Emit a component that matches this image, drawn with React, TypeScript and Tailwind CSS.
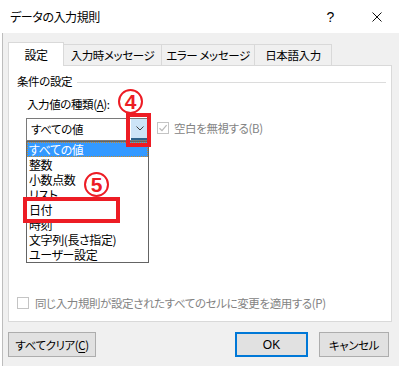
import React from "react";

const jp =
  "font-['Noto_Sans_CJK_JP','Noto_Sans_CJK_SC',sans-serif] [font-feature-settings:'palt']";

const tabs = [
  { label: "入力時メッセージ", w: "w-[98px]" },
  { label: "エラー メッセージ", w: "w-[93px]" },
  { label: "日本語入力", w: "w-[77px]" },
];

const items = [
  "すべての値",
  "整数",
  "小数点数",
  "リスト",
  "日付",
  "時刻",
  "文字列(長さ指定)",
  "ユーザー設定",
];

const Circled = ({ n, className }: { n: string; className: string }) => (
  <div
    className={`absolute w-[25px] h-[25px] rounded-full border-2 border-[#ed1c24] bg-white flex items-center justify-center text-[#ed1c24] text-[21px] font-bold leading-none tracking-normal font-['Liberation_Sans',sans-serif] ${className}`}
  >
    {n}
  </div>
);

const Check = ({ checked }: { checked?: boolean }) => (
  <div className="w-[12px] h-[12px] border border-[#c4c4c4] bg-white shrink-0 flex items-center justify-center">
    {checked && (
      <svg width="10" height="10" viewBox="0 0 10 10">
        <path d="M1.5 5.2 L4 7.6 L8.6 2.2" fill="none" stroke="#b8b8b8" strokeWidth="1.2" />
      </svg>
    )}
  </div>
);

export default function App() {
  return (
    <div
      className={`relative w-[399px] h-[366px] overflow-hidden bg-white text-[11.5px] tracking-[-0.4px] text-black ${jp}`}
    >
      <div className="flex flex-col h-full">
        {/* title bar */}
        <div className="h-[33px] shrink-0 flex items-center pl-[10px] pr-[17px]">
          <span className="leading-[16px] text-[12px]">データの入力規則</span>
          <span className="ml-auto text-[14px] leading-none font-['Liberation_Sans',sans-serif] mt-[1px]">?</span>
          <svg className="ml-[38px] mt-[1px]" width="10" height="10" viewBox="0 0 10 10">
            <path d="M0.5 0.5 L9.5 9.5 M9.5 0.5 L0.5 9.5" stroke="#111" strokeWidth="1" />
          </svg>
        </div>

        {/* body */}
        <div className="flex-1 flex flex-col ml-[2px] border-l border-[#bdbdbd] bg-[#f0f0f0] pl-[5px] pr-[7px] pt-[9px]">
          {/* tabs */}
          <div className="flex items-end h-[23px]">
            <div className="relative z-10 w-[56px] h-[24px] -mb-px bg-white border border-b-0 border-[#d9d9d9] flex items-center justify-center leading-[16px] text-[12px]">
              設定
            </div>
            {tabs.map((t) => (
              <div
                key={t.label}
                className={`${t.w} h-[21px] border-t border-r border-[#d9d9d9] bg-[#f0f0f0] flex items-center justify-center leading-[16px] whitespace-pre`}
              >
                {t.label}
              </div>
            ))}
          </div>

          {/* panel */}
          <div className="h-[257px] shrink-0 border border-[#d9d9d9] bg-white flex flex-col pl-[8px] pt-[7px] pb-[10px]">
            <div className="flex items-center leading-[16px]">
              <span>条件の設定</span>
              <div className="flex-1 h-px bg-[#dcdcdc] ml-[5px] mr-[5px] mt-[3px]" />
            </div>
            <div className="mt-[7px] ml-[10px] leading-[16px]">
              入力値の種類(<span className="underline underline-offset-2">A</span>):
            </div>
            <div className="mt-[6px] ml-[9px] flex items-start">
              <div className="relative w-[123px] h-[23px] border border-[#7a7a7a] bg-white">
                <div className="pl-[4px] leading-[21px]">すべての値</div>
                <div className="absolute right-0 top-0 bottom-0 w-[17px] bg-[#cce4f7] border-b-2 border-[#2c628b] flex items-center justify-center">
                  <svg width="8" height="5" viewBox="0 0 8 5">
                    <path d="M0.5 0.5 L4 4 L7.5 0.5" fill="none" stroke="#404040" strokeWidth="1" />
                  </svg>
                </div>
                {/* open list */}
                <div className="absolute -left-px top-[22px] z-20 w-[123px] h-[122px] border border-[#646464] bg-white">
                  {items.map((it, i) => (
                    <div
                      key={it}
                      className={`h-[15px] leading-[15px] pl-[2px] whitespace-nowrap text-[12px] ${
                        i === 0 ? "bg-[#3399ff] text-white outline outline-1 outline-dotted outline-[#c98a2a] -outline-offset-1" : ""
                      }`}
                    >
                      {it}
                    </div>
                  ))}
                </div>
              </div>
              <div className="ml-[8px] mt-[3px] flex items-center gap-[5px] text-[#838383] leading-[14px]">
                <Check checked />
                <span>空白を無視する(B)</span>
              </div>
            </div>

            <div className="mt-auto flex items-center gap-[6px] text-[#838383] leading-[16px]">
              <Check />
              <span>同じ入力規則が設定されたすべてのセルに変更を適用する(P)</span>
            </div>
          </div>

          {/* buttons */}
          <div className="mt-[10px] flex items-start">
            <button className="w-[88px] h-[25px] bg-[#e1e1e1] border border-[#adadad] leading-[16px]">
              すべてクリア(<span className="underline underline-offset-2">C</span>)
            </button>
            <button className="ml-auto w-[73px] h-[25px] bg-[#e1e1e1] border-2 border-[#0078d7] leading-[16px] font-['Liberation_Sans',sans-serif] text-[12px] tracking-normal">
              OK
            </button>
            <button className="ml-[11px] mr-[3px] w-[70px] h-[25px] bg-[#e1e1e1] border border-[#adadad] leading-[16px]">
              キャンセル
            </button>
          </div>
        </div>
      </div>

      {/* annotations */}
      <div className="absolute z-30 left-[126px] top-[113px] w-[25px] h-[34px] border-4 border-[#ed1c24]" />
      <div className="absolute z-30 left-[23px] top-[197px] w-[97px] h-[26px] border-4 border-[#ed1c24]" />
      <Circled n="4" className="z-30 left-[118px] top-[89px]" />
      <Circled n="5" className="z-30 left-[84px] top-[172px]" />
    </div>
  );
}
